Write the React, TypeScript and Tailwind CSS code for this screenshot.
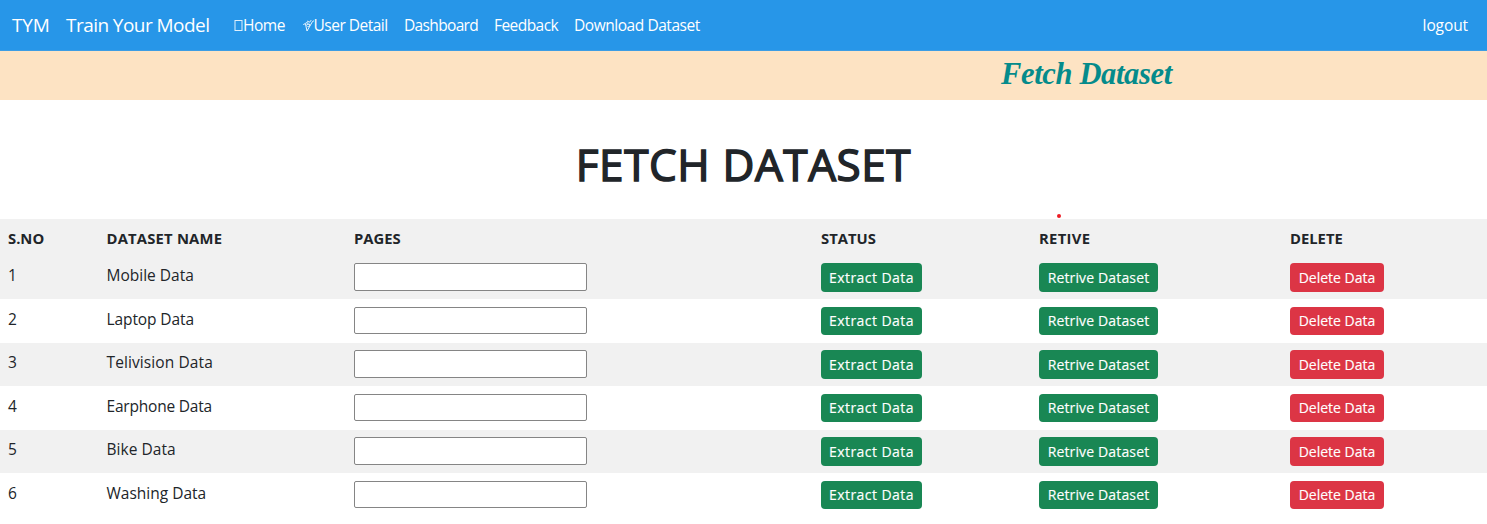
import React from "react";

const datasets = [
  { name: "Mobile Data", tracking: "tracking-[0px]" },
  { name: "Laptop Data", tracking: "tracking-[-0.1px]" },
  { name: "Telivision Data", tracking: "tracking-[0.1px]" },
  { name: "Earphone Data", tracking: "tracking-[-0.2px]" },
  { name: "Bike Data", tracking: "tracking-[0.05px]" },
  { name: "Washing Data", tracking: "tracking-[0px]" },
];

const grid = "grid grid-cols-[98.5px_247.5px_467px_218px_251px_1fr] pl-[8px]";

const button =
  "h-[28.5px] rounded-[4px] text-[14px] whitespace-nowrap text-white [-webkit-text-stroke:0.15px_white]";

function BoxIcon() {
  return (
    <svg width="9" height="13" viewBox="0 0 9 13" className="shrink-0" fill="none" stroke="currentColor" strokeWidth="1">
      <rect x="1" y="1.5" width="7" height="10" strokeOpacity="0.85" />
    </svg>
  );
}

function UserIcon() {
  return (
    <svg width="11" height="14" viewBox="0 0 11 14" className="shrink-0" fill="none" stroke="currentColor" strokeWidth="0.9" strokeLinecap="round" strokeLinejoin="round">
      <path d="M0.6 5.4 L2.4 4.6 L4 12 L9.6 2.4 L11 1.8" />
      <path d="M2.8 4 Q4.8 2.6 4.8 4.4 Q4.8 6 3.6 6.2 M5 5.2 Q7.4 4.4 6.6 6.6 Q5.8 8 4.8 7.6 M4.4 2.2 L6.6 3.2 L8 1.4" />
    </svg>
  );
}

export default function App() {
  return (
    <div className="h-[524px] w-full overflow-hidden bg-white font-['Open_Sans','Noto_Sans',sans-serif] text-[#212529]">
      <nav className="flex h-[51px] items-center border-b border-[#3d9de3] bg-[#2796e8] pt-px pl-[12px] pr-[19px] text-[15.5px] tracking-[-0.45px] whitespace-nowrap text-white">
        <span className="w-[54px] text-[19px] tracking-[-0.2px]">TYM</span>
        <span className="w-[168px] text-[19px] tracking-[-0.55px]">Train Your Model</span>
        <span className="flex w-[68.5px] items-center"><BoxIcon />Home</span>
        <span className="flex w-[101.5px] items-center tracking-[-0.5px]"><UserIcon />User Detail</span>
        <span className="w-[90px] tracking-[-0.65px]">Dashboard</span>
        <span className="w-[80px] tracking-[-0.55px]">Feedback</span>
        <span>Download Dataset</span>
        <span className="ml-auto tracking-[-0.1px]">logout</span>
      </nav>
      <div className="h-[49px] bg-[#fde3c3] pl-[1001px] font-['Monotype_Corsiva','Liberation_Serif',serif] text-[30.5px] leading-[46px] font-bold tracking-[-0.35px] whitespace-nowrap text-[#058b8b] italic">
        Fetch Dataset
      </div>
      <div className="flex h-[119px] justify-center">
        <h1 className="pt-[35px] text-[44px] leading-[58px] tracking-[0.6px] whitespace-nowrap [-webkit-text-stroke:1.5px_#212529]">FETCH DATASET</h1>
      </div>
      <div className="relative text-[15.5px]">
        <span className="absolute -top-[5px] left-[1057px] size-[4px] rounded-full bg-[#ed1c24]" />
        <div className={`${grid} h-[36.6px] items-center bg-[#f1f1f1] pt-px text-[14.8px] font-bold`}>
          <span>S.NO</span>
          <span className="tracking-[0.2px]">DATASET NAME</span>
          <span>PAGES</span>
          <span>STATUS</span>
          <span className="tracking-[0.3px]">RETIVE</span>
          <span>DELETE</span>
        </div>
        {datasets.map(({ name, tracking }, i) => (
          <div key={name} className={`${grid} h-[43.5px] items-start pt-[7.7px] leading-[24px] ${i % 2 ? "bg-white" : "bg-[#f1f1f1]"}`}>
            <span>{i + 1}</span>
            <span className={tracking}>{name}</span>
            <input aria-label={name} className="h-[27.5px] w-[233px] rounded-[2px] border border-[#858585] bg-white" />
            <button className={`${button} w-[101px] bg-[#198754] tracking-[0.45px]`}>Extract Data</button>
            <button className={`${button} w-[119px] bg-[#198754] tracking-[0.15px]`}>Retrive Dataset</button>
            <button className={`${button} w-[94px] bg-[#dc3545] tracking-[0px]`}>Delete Data</button>
          </div>
        ))}
      </div>
    </div>
  );
}
